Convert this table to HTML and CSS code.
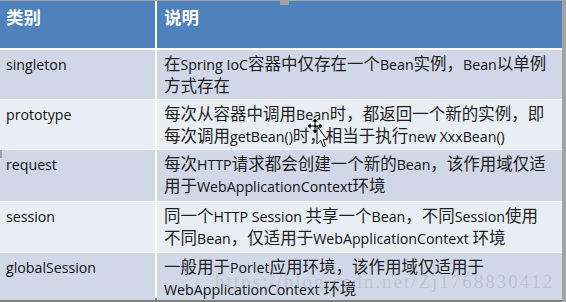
FILE: index.html
```html
<!DOCTYPE html>
<html lang="zh-CN">
<head>
<meta charset="utf-8">
<title>Bean 作用域</title>
<link rel="stylesheet" href="styles.css">
</head>
<body>
<div class="slide">
  <div class="table">
    <div class="row head">
      <div class="cell c1">类别</div>
      <div class="cell c2">说明</div>
    </div>
    <div class="row odd h1">
      <div class="cell c1"><span class="en">singleton</span></div>
      <div class="cell c2">在<span class="en">Spring IoC</span>容器中仅存在一个<span class="en">Bean</span>实例，<span class="en">Bean</span>以单例<br>方式存在</div>
    </div>
    <div class="row even h2">
      <div class="cell c1"><span class="en">prototype</span></div>
      <div class="cell c2">每次从容器中调用<span class="en">Bean</span>时，都返回一个新的实例，即<br>每次调用<span class="en">getBean()</span>时，相当于执行<span class="en">new XxxBean()</span></div>
    </div>
    <div class="row odd h3">
      <div class="cell c1"><span class="en">request</span></div>
      <div class="cell c2">每次<span class="en">HTTP</span>请求都会创建一个新的<span class="en">Bean</span>，该作用域仅适<br>用于<span class="en">WebApplicationContext</span>环境</div>
    </div>
    <div class="row even h4">
      <div class="cell c1"><span class="en">session</span></div>
      <div class="cell c2">同一个<span class="en">HTTP Session </span>共享一个<span class="en">Bean</span>，不同<span class="en">Session</span>使用<br>不同<span class="en">Bean</span>，仅适用于<span class="en">WebApplicationContext </span>环境</div>
    </div>
    <div class="row odd h5">
      <div class="cell c1"><span class="en">globalSession</span></div>
      <div class="cell c2">一般用于<span class="en">Porlet</span>应用环境，该作用域仅适用于<br><span class="en">WebApplicationContext </span>环境</div>
    </div>
  </div>
  <div class="watermark">https://blog.csdn.net/Zj1768830412</div>
  <span class="handle handle-top"></span>
  <span class="handle handle-left"></span>
  <svg class="cursor" width="20" height="30" viewBox="0 0 20 30">
    <g fill="#000" stroke="#fff" stroke-width="0.9">
      <path d="M8 0 L11.5 4 H9 V7 H12 V4.5 L16 8 L12 11.5 V9 H9 V12 H11.5 L8 16 L4.5 12 H7 V9 H4 V11.5 L0 8 L4 4.5 V7 H7 V4 H4.5 Z"/>
    </g>
    <path d="M10 8 V26 L13.6 22.4 L16.3 28.8 L18.6 27.8 L16 21.6 L20 21.6 Z" fill="#fff" stroke="#000" stroke-width="1"/>
  </svg>
</div>
</body>
</html>
```

FILE: styles.css
```css
html, body {
  margin: 0;
  padding: 0;
}

body {
  width: 566px;
  height: 302px;
  background: #a3a3a3;
  overflow: hidden;
}

.slide {
  position: relative;
  width: 566px;
  height: 302px;
}

.table {
  width: 562px;
  margin-top: 1px;
  display: flex;
  flex-direction: column;
  gap: 1px;
  background: #ffffff;
  border-bottom: 4px solid #7d7d7d;
  font-family: "Noto Sans CJK SC", "Open Sans", sans-serif;
  font-size: 16.5px;
  line-height: 21px;
  color: #1e1e1e;
}

.row {
  display: grid;
  grid-template-columns: 155px 1fr;
  column-gap: 2px;
}

.head {
  height: 47px;
  margin-bottom: 1px;
}

.head .cell {
  background: #4f81bd;
  color: #ffffff;
  font-weight: 700;
  font-size: 17.5px;
  padding-top: 5px;
}

.head .c1 { padding-left: 6px; }
.head .c2 { padding-left: 7px; }

.h1 { height: 49px; }
.h2 { height: 49px; }
.h3 { height: 51px; }
.h4 { height: 50px; }
.h5 { height: 45px; }

.odd .cell { background: #d0d8e8; }
.even .cell { background: #e9edf4; }

.cell {
  padding-top: 3px;
  white-space: nowrap;
}

.c1 { padding-left: 6px; }
.c2 { padding-left: 7px; }

.en {
  font-family: "Open Sans", sans-serif;
  font-size: 14.2px;
  line-height: 21px;
  color: #111111;
}

.watermark {
  position: absolute;
  left: 215px;
  top: 271px;
  font-family: "Liberation Serif", serif;
  font-size: 19px;
  line-height: 19px;
  letter-spacing: 2px;
  color: rgba(140, 140, 150, 0.3);
  white-space: nowrap;
  pointer-events: none;
}

.handle {
  position: absolute;
  background: #a0a0a0;
}

.handle-top {
  left: 280px;
  top: 0;
  width: 9px;
  height: 4px;
}

.handle-left {
  left: 0;
  top: 149px;
  width: 2px;
  height: 8px;
}

.cursor {
  position: absolute;
  left: 307px;
  top: 117px;
}
```
